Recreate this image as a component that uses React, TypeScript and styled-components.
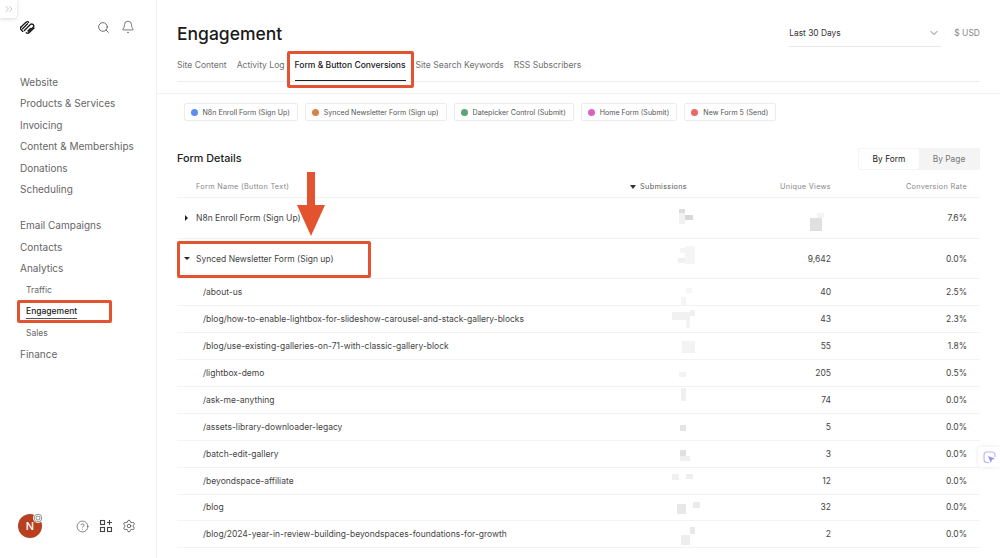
import React from 'react'
import styled, { createGlobalStyle, css } from 'styled-components'
import { Search, Bell, CircleHelp, Settings, ChevronDown, ChevronsRight } from 'lucide-react'

const RED = '#e4532f'

type Blot = [number, number, number, number, string]

const GlobalStyle = createGlobalStyle`
  html, body {
    margin: 0;
    height: 100%;
    overflow: hidden;
    background: #fff;
    font-family: Inter, "Liberation Sans", sans-serif;
    -webkit-font-smoothing: antialiased;
  }
`

const Page = styled.div`
  position: relative;
  display: flex;
  width: 1000px;
  height: 558px;
  overflow: hidden;
  background: #fff;
`

const marked = css`
  position: relative;
  &::after {
    content: '';
    position: absolute;
    border: 3px solid ${RED};
    border-radius: 2px;
    pointer-events: none;
  }
`

const Sidebar = styled.aside`
  flex: 0 0 157px;
  min-width: 0;
  box-sizing: border-box;
  display: flex;
  flex-direction: column;
  border-right: 1px solid #f1f1f1;
  padding: 0 20px;
`

const CollapseTab = styled.button`
  position: absolute;
  left: 0;
  top: 0;
  width: 17px;
  height: 18px;
  padding: 0;
  border: 0;
  background: #fff;
  border-radius: 0 0 3px 0;
  box-shadow: 0 1px 4px rgba(0, 0, 0, 0.16);
  color: #9a9a9a;
  display: flex;
  align-items: center;
  justify-content: center;
`

const SideTop = styled.div`
  display: flex;
  align-items: center;
  height: 18px;
  margin-top: 18px;
  color: #444;
`

const TopIcons = styled.div`
  margin-left: auto;
  margin-right: 1px;
  display: flex;
  gap: 11px;
  align-items: center;
`

const Nav = styled.nav`
  margin-top: 35.5px;
  display: flex;
  flex-direction: column;
  gap: 14.5px;
`

const NavGroup = styled.ul`
  list-style: none;
  margin: 0;
  padding: 0;
`

const NavItem = styled.li<{ $sub?: boolean; $active?: boolean }>`
  height: 21.5px;
  line-height: 21.5px;
  white-space: nowrap;
  font-size: ${({ $sub }) => ($sub ? '8.5px' : '10px')};
  padding-left: ${({ $sub }) => ($sub ? '6px' : '0')};
  color: ${({ $active }) => ($active ? '#222' : '#666')};
  font-weight: ${({ $active }) => ($active ? 500 : 400)};
`

const EngagementLabel = styled.span`
  ${marked}
  display: inline-block;
  line-height: 13px;
  border-bottom: 1px solid #555;
  &::after {
    left: -9px;
    top: -5px;
    width: 89px;
    height: 17px;
  }
`

const SideFooter = styled.div`
  margin-top: auto;
  margin-bottom: 20px;
  display: flex;
  align-items: center;
  color: #444;
`

const Avatar = styled.div`
  position: relative;
  width: 24px;
  height: 24px;
  margin-left: -2px;
  border-radius: 50%;
  background: #b8401f;
  color: #fff;
  font-size: 11px;
  font-weight: 500;
  display: flex;
  align-items: center;
  justify-content: center;
`

const AvatarBadge = styled.svg`
  position: absolute;
  right: -1px;
  top: -1px;
  width: 10px;
  height: 10px;
  background: #fff;
  border-radius: 50%;
`

const FooterIcons = styled.div`
  margin-left: auto;
  display: flex;
  gap: 9.5px;
  align-items: center;
`

const Main = styled.main`
  flex: 1;
  min-width: 0;
  display: flex;
  flex-direction: column;
`

const Header = styled.header`
  height: 94px;
  box-sizing: border-box;
  padding: 22px 20px 0;
  border-bottom: 1px solid #f2f2f2;
`

const TitleRow = styled.div`
  display: flex;
  align-items: flex-start;
  height: 25px;
`

const Title = styled.h1`
  margin: 0;
  font-size: 17.5px;
  line-height: 24px;
  font-weight: 500;
  color: #1a1a1a;
`

const RangeSelect = styled.div`
  margin-left: auto;
  box-sizing: border-box;
  width: 153px;
  height: 25px;
  padding-left: 1px;
  display: flex;
  align-items: center;
  justify-content: space-between;
  border-bottom: 1px solid #eaeaea;
  font-size: 8.4px;
  color: #333;
  padding-bottom: 2px;
  padding-right: 1px;
`

const Currency = styled.div`
  margin-left: 13px;
  font-size: 8.5px;
  line-height: 23px;
  color: #888;
`

const Tabs = styled.div`
  margin-top: 8px;
  display: flex;
  gap: 10px;
  height: 26px;
  border-bottom: 1px solid #eeeeee;
`

const Tab = styled.div<{ $active?: boolean }>`
  font-size: 8.56px;
  line-height: 20px;
  height: 26px;
  box-sizing: border-box;
  white-space: nowrap;
  color: ${({ $active }) => ($active ? '#1a1a1a' : '#707070')};
  font-weight: ${({ $active }) => ($active ? 500 : 400)};
  ${({ $active }) =>
    $active &&
    css`
      ${marked}
      border-bottom: 1px solid #222;
      &::after {
        left: -8px;
        top: -4px;
        width: 121px;
        height: 31px;
      }
    `}
`

const Content = styled.div`
  padding: 9px 20px 0;
`

const Chips = styled.div`
  display: flex;
  gap: 7px;
  padding-left: 6.5px;
`

const Chip = styled.div`
  box-sizing: border-box;
  height: 18px;
  padding: 0 7px 0 6px;
  display: flex;
  align-items: center;
  gap: 5px;
  border: 1px solid #ececec;
  border-radius: 2px;
  font-size: 7.1px;
  color: #555;
  white-space: nowrap;
`

const ChipDot = styled.span<{ $color: string }>`
  width: 7px;
  height: 7px;
  border-radius: 50%;
  background: ${({ $color }) => $color};
`

const DetailsHead = styled.div`
  margin-top: 26px;
  height: 23px;
  display: flex;
  align-items: center;
  justify-content: space-between;
`

const DetailsTitle = styled.h2`
  margin: 0;
  font-size: 10.8px;
  font-weight: 500;
  color: #222;
`

const Toggle = styled.div`
  display: flex;
  box-sizing: border-box;
  width: 122px;
  height: 22px;
  padding: 1px;
  background: #f4f4f4;
  border-radius: 2px;
`

const ToggleOption = styled.div<{ $on?: boolean }>`
  flex: 1;
  display: flex;
  align-items: center;
  justify-content: center;
  font-size: 8.4px;
  border-radius: 2px;
  color: ${({ $on }) => ($on ? '#1a1a1a' : '#777')};
  background: ${({ $on }) => ($on ? '#fff' : 'transparent')};
`

const Row = styled.div<{ $h: number }>`
  display: grid;
  grid-template-columns: 1fr 120px 144px 136px;
  align-items: center;
  box-sizing: border-box;
  height: ${({ $h }) => $h}px;
  padding-right: 13px;
  border-bottom: 1px solid #f3f3f3;
  font-size: 8.5px;
  color: #444;
`

const HeadRow = styled(Row)`
  margin-top: 4px;
  padding-top: 2px;
  font-size: 7.3px;
  letter-spacing: 0.3px;
  color: #888;
`

const NameCell = styled.div<{ $sub?: boolean }>`
  display: flex;
  align-items: center;
  white-space: nowrap;
  padding-left: ${({ $sub }) => ($sub ? '26px' : '19px')};
`

const MarkedName = styled(NameCell)`
  ${marked}
  &::after {
    left: 0;
    top: -13px;
    width: 188px;
    height: 31px;
  }
`

const Caret = styled.span<{ $open?: boolean }>`
  position: absolute;
  left: 7px;
  top: 50%;
  width: 0;
  height: 0;
  ${({ $open }) =>
    $open
      ? css`
          margin-top: -1.5px;
          border-left: 3px solid transparent;
          border-right: 3px solid transparent;
          border-top: 3.5px solid #222;
        `
      : css`
          margin-top: -3px;
          margin-left: 1px;
          border-top: 3px solid transparent;
          border-bottom: 3px solid transparent;
          border-left: 3.5px solid #222;
        `}
`

const NameWrap = styled.div`
  position: relative;
`

const NumCell = styled.div`
  display: flex;
  justify-content: flex-end;
  align-items: center;
  gap: 4px;
`

const SortMark = styled.span`
  width: 0;
  height: 0;
  border-left: 3px solid transparent;
  border-right: 3px solid transparent;
  border-top: 4px solid #333;
`

const SubmissionsLabel = styled.span`
  color: #555;
`

const BlotSvg = styled.svg`
  display: block;
  width: 40px;
  height: 40px;
  margin: -10px -25px -10px 0;
  overflow: visible;
`

const Arrow = styled.svg`
  position: absolute;
  left: 297px;
  top: 172px;
  width: 28px;
  height: 64px;
`

const AssistBubble = styled.div`
  position: absolute;
  right: 0;
  top: 447px;
  width: 22px;
  height: 20px;
  background: #fff;
  border-radius: 4px 0 0 4px;
  box-shadow: 0 0 4px rgba(0, 0, 0, 0.1);
  display: flex;
  align-items: center;
  justify-content: center;
`

const chips = [
  { label: 'N8n Enroll Form (Sign Up)', color: '#5b8df6' },
  { label: 'Synced Newsletter Form (Sign up)', color: '#d8824a' },
  { label: 'Datepicker Control (Submit)', color: '#5aa476' },
  { label: 'Home Form (Submit)', color: '#d765c6' },
  { label: 'New Form 5 (Send)', color: '#e76a6a' },
]

// blurred figures: x from 672, y from the row centre
const pages: { path: string; views: string; rate: string; blots: Blot[] }[] = [
  { path: '/about-us', views: '40', rate: '2.5%', blots: [[14, -4, 6, 5, '#f6f6f6'], [9, 5, 5, 8, '#f5f5f5']] },
  {
    path: '/blog/how-to-enable-lightbox-for-slideshow-carousel-and-stack-gallery-blocks',
    views: '43',
    rate: '2.3%',
    blots: [[0, -7, 18, 8, '#f1f1f1'], [18, -9, 5, 6, '#efefef'], [14, 1, 4, 8, '#f3f3f3']],
  },
  { path: '/blog/use-existing-galleries-on-71-with-classic-gallery-block', views: '55', rate: '1.8%', blots: [[10, -5, 13, 12, '#f3f3f3']] },
  { path: '/lightbox-demo', views: '205', rate: '0.5%', blots: [[7, -1, 7, 5, '#f3f3f3']] },
  { path: '/ask-me-anything', views: '74', rate: '0.0%', blots: [[9, -12, 5, 13, '#f0f0f0']] },
  { path: '/assets-library-downloader-legacy', views: '5', rate: '0.0%', blots: [[8, -2, 6, 6, '#e4e4e4']] },
  { path: '/batch-edit-gallery', views: '3', rate: '0.0%', blots: [[8, -4, 6, 6, '#e0e0e0'], [8, 2, 10, 5, '#efefef']] },
  { path: '/beyondspace-affiliate', views: '12', rate: '0.0%', blots: [[0, -7, 7, 6, '#f0f0f0'], [14, -7, 7, 5, '#eeeeee']] },
  { path: '/blog', views: '32', rate: '0.0%', blots: [[5, -3, 9, 10, '#e8e8e8'], [21, -5, 7, 6, '#ebebeb']] },
  { path: '/blog/2024-year-in-review-building-beyondspaces-foundations-for-growth', views: '2', rate: '0.0%', blots: [[18, -7, 5, 7, '#e8e8e8'], [9, 1, 9, 10, '#eeeeee']] },
]

const Blots: React.FC<{ items: Blot[] }> = ({ items }) => (
  <BlotSvg viewBox="0 -20 40 40" aria-hidden>
    {items.map(([x, y, w, h, fill], i) => (
      <rect key={i} x={x} y={y} width={w} height={h} fill={fill} />
    ))}
  </BlotSvg>
)

// interlocking diagonal bars of the Squarespace mark
const Logo = () => (
  <svg width="15" height="15" viewBox="0 0 15 15" fill="none" stroke="#1c1c1c" strokeWidth="1.35" strokeLinecap="round">
    <path d="M1 7 6 2.2a1.9 1.9 0 0 1 2.7 0" />
    <path d="M2.6 8.8 7.6 3.8" />
    <path d="M4.4 10.6 10.4 4.6a1.9 1.9 0 0 1 2.7 2.7L8.6 12" />
    <path d="M1 7a1.8 1.8 0 0 0 0 2.6l1.8 1.8" />
    <path d="M6.3 12.8a1.9 1.9 0 0 0 2.7 0L14 7.9" />
    <path d="M10.5 8.4 8 10.9" />
  </svg>
)

const BlocksPlus = () => (
  <svg width="14" height="14" viewBox="0 0 14 14" fill="none" stroke="currentColor" strokeWidth="1.1">
    <rect x="1.5" y="1.5" width="4" height="4" />
    <rect x="1.5" y="8.5" width="4" height="4" />
    <rect x="8.5" y="8.5" width="4" height="4" />
    <path d="M10.5 1v5M8 3.5h5" />
  </svg>
)

export default function App() {
  return (
    <Page>
      <GlobalStyle />
      <CollapseTab aria-label="Expand">
        <ChevronsRight size={12} strokeWidth={1.1} />
      </CollapseTab>
      <Sidebar>
        <SideTop>
          <Logo />
          <TopIcons>
            <Search size={13} strokeWidth={1.4} />
            <Bell size={14} strokeWidth={1.2} />
          </TopIcons>
        </SideTop>
        <Nav>
          <NavGroup>
            {['Website', 'Products & Services', 'Invoicing', 'Content & Memberships', 'Donations', 'Scheduling'].map(n => (
              <NavItem key={n}>{n}</NavItem>
            ))}
          </NavGroup>
          <NavGroup>
            <NavItem>Email Campaigns</NavItem>
            <NavItem>Contacts</NavItem>
            <NavItem>Analytics</NavItem>
            <NavItem $sub>Traffic</NavItem>
            <NavItem $sub $active>
              <EngagementLabel>Engagement</EngagementLabel>
            </NavItem>
            <NavItem $sub>Sales</NavItem>
            <NavItem>Finance</NavItem>
          </NavGroup>
        </Nav>
        <SideFooter>
          <Avatar>
            N
            <AvatarBadge viewBox="0 0 10 10" fill="none" stroke="#777" strokeWidth="0.8">
              <circle cx="5" cy="5" r="3.8" />
              <circle cx="5" cy="5" r="2" />
            </AvatarBadge>
          </Avatar>
          <FooterIcons>
            <CircleHelp size={13} strokeWidth={1.2} />
            <BlocksPlus />
            <Settings size={14} strokeWidth={1.3} />
          </FooterIcons>
        </SideFooter>
      </Sidebar>
      <Main>
        <Header>
          <TitleRow>
            <Title>Engagement</Title>
            <RangeSelect>
              Last 30 Days
              <ChevronDown size={12} strokeWidth={1.3} />
            </RangeSelect>
            <Currency>$ USD</Currency>
          </TitleRow>
          <Tabs>
            <Tab>Site Content</Tab>
            <Tab>Activity Log</Tab>
            <Tab $active>Form &amp; Button Conversions</Tab>
            <Tab>Site Search Keywords</Tab>
            <Tab>RSS Subscribers</Tab>
          </Tabs>
        </Header>
        <Content>
          <Chips>
            {chips.map(c => (
              <Chip key={c.label}>
                <ChipDot $color={c.color} />
                {c.label}
              </Chip>
            ))}
          </Chips>
          <DetailsHead>
            <DetailsTitle>Form Details</DetailsTitle>
            <Toggle>
              <ToggleOption $on>By Form</ToggleOption>
              <ToggleOption>By Page</ToggleOption>
            </Toggle>
          </DetailsHead>
          <HeadRow $h={24}>
            <NameCell>Form Name (Button Text)</NameCell>
            <NumCell>
              <SortMark />
              <SubmissionsLabel>Submissions</SubmissionsLabel>
            </NumCell>
            <NumCell>Unique Views</NumCell>
            <NumCell>Conversion Rate</NumCell>
          </HeadRow>
          <Row $h={40.7}>
            <NameWrap>
              <Caret />
              <NameCell>N8n Enroll Form (Sign Up)</NameCell>
            </NameWrap>
            <NumCell>
              <Blots items={[[7, -9, 6, 4, '#dddddd'], [7, -5, 6, 11, '#f2f2f2'], [13, -3, 8, 5, '#d8d8d8']]} />
            </NumCell>
            <NumCell>
              <Blots items={[[1, -5, 7, 5, '#f3f3f3'], [-6, 0, 12, 13, '#e0e0e0']]} />
            </NumCell>
            <NumCell>7.6%</NumCell>
          </Row>
          <Row $h={40.7}>
            <NameWrap>
              <Caret $open />
              <MarkedName>Synced Newsletter Form (Sign up)</MarkedName>
            </NameWrap>
            <NumCell>
              <Blots items={[[13, -13, 10, 18, '#f5f5f5'], [6, -1, 7, 5, '#f0f0f0'], [8, -11, 5, 5, '#f5f5f5']]} />
            </NumCell>
            <NumCell>9,642</NumCell>
            <NumCell>0.0%</NumCell>
          </Row>
          {pages.map(p => (
            <Row key={p.path} $h={26.9}>
              <NameCell $sub>{p.path}</NameCell>
              <NumCell>
                <Blots items={p.blots} />
              </NumCell>
              <NumCell>{p.views}</NumCell>
              <NumCell>{p.rate}</NumCell>
            </Row>
          ))}
        </Content>
      </Main>
      <Arrow viewBox="0 0 28 64" aria-hidden>
        <path d="M10 0h8v33h10L14 64 0 33h10z" fill={RED} />
      </Arrow>
      <AssistBubble>
        <svg width="13" height="13" viewBox="0 0 13 13" fill="none">
          <path d="M6 11.5H4a3 3 0 0 1-3-3V4a3 3 0 0 1 3-3h5a3 3 0 0 1 3 3v2" stroke="#b9b2fb" strokeWidth="1.1" />
          <path d="M5 5l7 2.5-3 1.2-1.2 3.2z" fill="#9c92f6" />
        </svg>
      </AssistBubble>
    </Page>
  )
}
